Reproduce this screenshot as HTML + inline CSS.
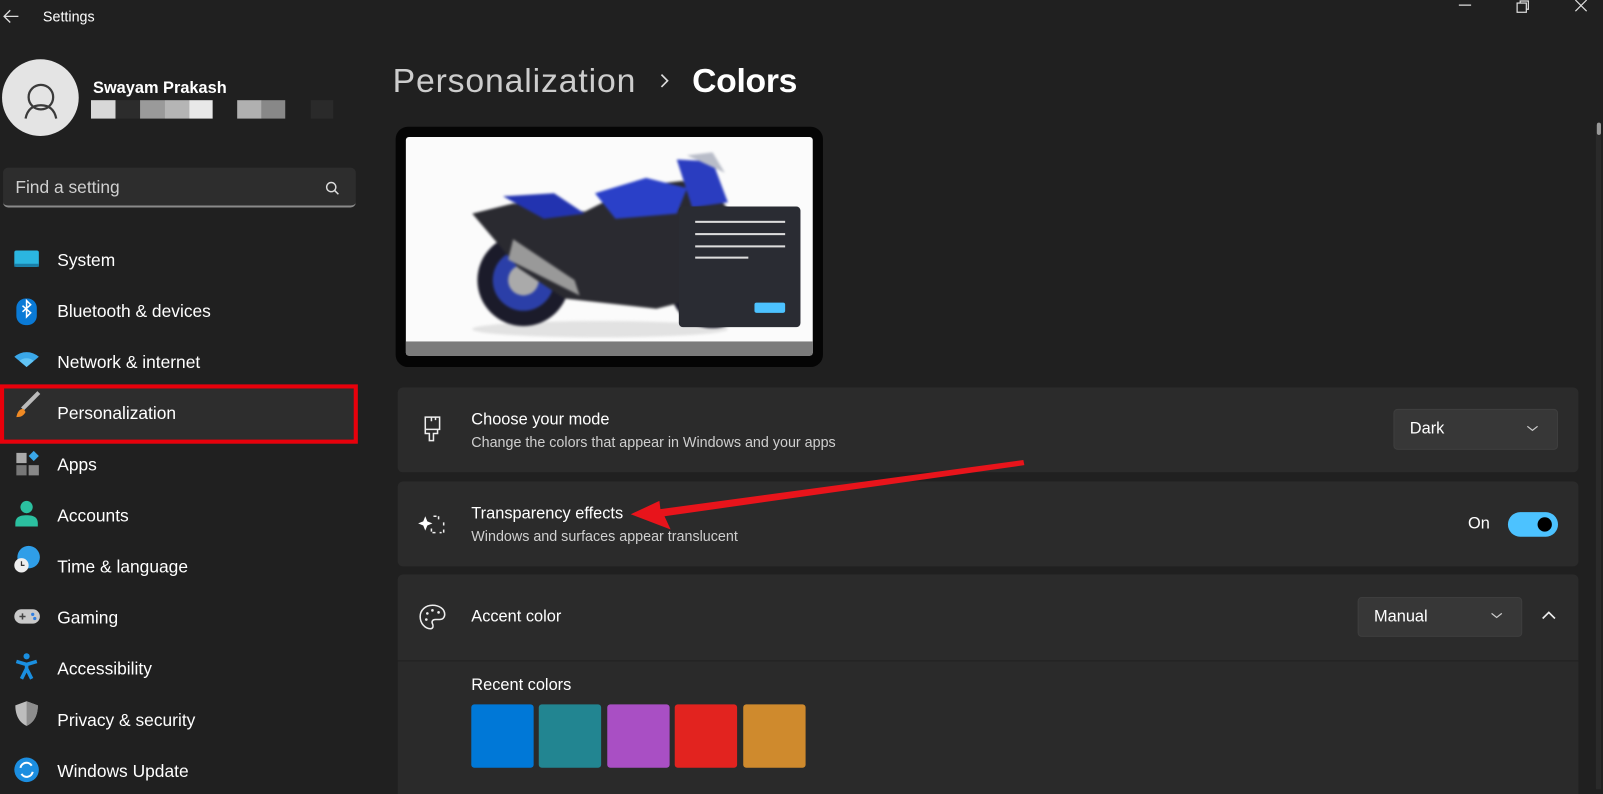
<!DOCTYPE html>
<html><head><meta charset="utf-8"><style>
*{box-sizing:border-box;margin:0;padding:0}
html,body{width:1603px;height:788px;overflow:hidden;background:#202020}
#w{position:absolute;left:0;top:0;width:1568px;height:771px;transform:scale(1.02232);transform-origin:0 0;background:#202020;font-family:"Liberation Sans",sans-serif;color:#fff}
.a{position:absolute}
.nav{position:absolute;left:56px;font-size:17px;color:#fff}
.card{position:absolute;left:389px;width:1155px;background:#2b2b2b;border-radius:5px}
.t{font-size:16px;color:#fff}
.s{font-size:14px;color:#cfcfcf}
.dd{position:absolute;background:#373737;border:1px solid #3e3e3e;border-radius:4px;font-size:16px;color:#fff}
</style></head><body><div id="w">
<svg class="a" style="left:2px;top:8px" width="18" height="16"><path d="M16 8H2M8 2L2 8l6 6" stroke="#ddd" stroke-width="1.3" fill="none"/></svg>
<div class="a" style="left:42px;top:8px;font-size:14px;color:#fff">Settings</div>
<svg class="a" style="left:1425px;top:0" width="140" height="14"><path d="M2 5h12" stroke="#ddd" stroke-width="1.2"/><rect x="59" y="3" width="9" height="9" stroke="#ddd" fill="none" stroke-width="1.2"/><path d="M62 3V1h8v8h-2" stroke="#ddd" fill="none" stroke-width="1.2"/><path d="M116 0l11 11M127 0l-11 11" stroke="#ddd" stroke-width="1.2"/></svg>
<div class="a" style="left:2px;top:58px;width:75px;height:75px;border-radius:50%;background:#e4e4e4"></div>
<svg class="a" style="left:2px;top:58px" width="75" height="75"><circle cx="38" cy="37" r="12" stroke="#3a3a3a" stroke-width="2.2" fill="none"/><path d="M23 58c2-10 8-13 15-13s13 3 15 13" stroke="#3a3a3a" stroke-width="2.2" fill="none"/></svg>
<div class="a" style="left:91px;top:78px;font-size:16px;font-weight:bold">Swayam Prakash</div>
<div class="a" style="left:89px;top:98px;width:24px;height:18px;background:#d8d8d8"></div>
<div class="a" style="left:113px;top:98px;width:24px;height:18px;background:#2c2c2c"></div>
<div class="a" style="left:137px;top:98px;width:24px;height:18px;background:#9a9a9a"></div>
<div class="a" style="left:161px;top:98px;width:24px;height:18px;background:#b5b5b5"></div>
<div class="a" style="left:185px;top:98px;width:23px;height:18px;background:#e8e8e8"></div>
<div class="a" style="left:232px;top:98px;width:24px;height:18px;background:#b0b0b0"></div>
<div class="a" style="left:256px;top:98px;width:23px;height:18px;background:#888"></div>
<div class="a" style="left:304px;top:98px;width:22px;height:18px;background:#2a2a2a"></div>
<div class="a" style="left:3px;top:164px;width:345px;height:39px;background:#2d2d2d;border-radius:5px;border-bottom:2px solid #8a8a8a"></div>
<div class="a" style="left:15px;top:174px;font-size:17px;color:#cfcfcf">Find a setting</div>
<svg class="a" style="left:318px;top:177px" width="14" height="14"><circle cx="6" cy="6" r="4.5" stroke="#ddd" stroke-width="1.4" fill="none"/><path d="M9.3 9.3L13 13" stroke="#ddd" stroke-width="1.5"/></svg>
<div class="a" style="left:0;top:376px;width:350px;height:58px;border:4px solid #e8000b;background:#2d2d2d"></div>
<svg class="a" style="left:12px;top:242px" width="30" height="530">
<rect x="2" y="3" width="24" height="16" rx="2" fill="#2bb6e0"/><rect x="2" y="16" width="24" height="3" fill="#1a7fa8"/>
<rect x="4" y="50" width="20" height="26" rx="9" fill="#0a7ad6"/><path d="M10 57l8 7-4 4V52l4 4-8 7" stroke="#fff" stroke-width="1.5" fill="none"/>
<path d="M2 107a18 18 0 0 1 24 0l-12 10z" fill="#3aa7e8"/><path d="M7 111a11 11 0 0 1 14 0l-7 6z" fill="#62c4f5"/>
<path d="M26 142L10 158" stroke="#bbb" stroke-width="4"/><path d="M4 166c1-5 3-8 7-8l2 3c-2 4-5 5-9 5z" fill="#f08a24"/>
<rect x="4" y="201" width="10" height="10" fill="#aaa"/><rect x="4" y="213" width="10" height="10" fill="#777"/><rect x="16" y="213" width="10" height="10" fill="#888"/><path d="M21 199l5 5-5 5-5-5z" fill="#3aa7e8"/>
<circle cx="14" cy="254" r="6" fill="#2bc0a0"/><path d="M3 270c0-6 4-8 11-8s11 2 11 8v3H3z" fill="#2bc0a0"/>
<circle cx="16" cy="303" r="11" fill="#2f9ee8"/><circle cx="9" cy="311" r="7" fill="#eee"/><path d="M9 307v4h3" stroke="#333" stroke-width="1.2" fill="none"/>
<rect x="2" y="354" width="25" height="14" rx="7" fill="#c9c9c9"/><path d="M7 361h6M10 358v6" stroke="#444" stroke-width="1.5"/><circle cx="20" cy="359" r="1.6" fill="#2f7ee0"/><circle cx="22" cy="363" r="1.6" fill="#2f7ee0"/>
<circle cx="14" cy="400" r="3" fill="#1a8fe0"/><path d="M4 405l10 3 10-3M14 408v4l-5 10M14 412l5 10" stroke="#1a8fe0" stroke-width="3.5" fill="none"/>
<path d="M14 444l11 4c0 10-4 17-11 20-7-3-11-10-11-20z" fill="#bdbdbd"/><path d="M14 444l11 4c0 10-4 17-11 20z" fill="#8d8d8d"/>
<circle cx="14" cy="511" r="12" fill="#1c8ee0"/><path d="M8 509a6 6 0 0 1 11-2M20 513a6 6 0 0 1-11 2" stroke="#fff" stroke-width="2" fill="none"/>
</svg>
<div class="nav" style="top:245px">System</div>
<div class="nav" style="top:295px">Bluetooth &amp; devices</div>
<div class="nav" style="top:345px">Network &amp; internet</div>
<div class="nav" style="top:395px">Personalization</div>
<div class="nav" style="top:445px">Apps</div>
<div class="nav" style="top:495px">Accounts</div>
<div class="nav" style="top:545px">Time &amp; language</div>
<div class="nav" style="top:595px">Gaming</div>
<div class="nav" style="top:645px">Accessibility</div>
<div class="nav" style="top:695px">Privacy &amp; security</div>
<div class="nav" style="top:745px">Windows Update</div>
<div class="a" style="left:384px;top:60px;font-size:33px;color:#cdcdcd;letter-spacing:0.85px">Personalization</div>
<svg class="a" style="left:644px;top:71px" width="12" height="16"><path d="M3 2l6 6-6 6" stroke="#ddd" stroke-width="1.6" fill="none"/></svg>
<div class="a" style="left:677px;top:60px;font-size:33px;font-weight:bold;letter-spacing:-0.3px">Colors</div>
<div class="a" style="left:387px;top:124px;width:418px;height:235px;background:#050505;border-radius:12px"></div>
<div class="a" style="left:397px;top:134px;width:398px;height:214px;background:#fbfbfb;border-radius:3px;overflow:hidden">
<div class="a" style="left:0;top:200px;width:398px;height:14px;background:#7b7b7b"></div>
<svg class="a" style="left:60px;top:10px;filter:blur(1.2px)" width="300" height="190">
<ellipse cx="130" cy="178" rx="125" ry="8" fill="#e2e2e2"/>
<circle cx="55" cy="130" r="45" fill="#1b1b2a"/><circle cx="55" cy="130" r="30" fill="#2b3fa8"/><circle cx="55" cy="130" r="15" fill="#aaa"/>
<circle cx="240" cy="135" r="42" fill="#1b1b2a"/><circle cx="240" cy="135" r="28" fill="#2b3fa8"/>
<path d="M5 65l40-10 70 8 50-25 45-5 30 10 35 40-30 60-60 15-90-10-45-30z" fill="#2a2a30"/>
<path d="M35 48l50-3 30 20-40 5z" fill="#2233b0"/><path d="M125 45l50-15 40 10-10 25-60 5z" fill="#2a40c8"/><path d="M205 12l35 2 15 40-35 5z" fill="#2a3dc0"/><path d="M215 8l25-3 12 20z" fill="#b8bcc8"/>
<path d="M45 90l60 40 5 15-70-35z" fill="#999"/>
</svg>
</div>
<div class="a" style="left:664px;top:202px;width:119px;height:118px;background:#2a2c33;border-radius:4px"></div>
<div class="a" style="left:680px;top:216px;width:88px;height:2px;background:#ddd"></div>
<div class="a" style="left:680px;top:228px;width:88px;height:2px;background:#ddd"></div>
<div class="a" style="left:680px;top:240px;width:88px;height:2px;background:#ddd"></div>
<div class="a" style="left:680px;top:251px;width:52px;height:2px;background:#ddd"></div>
<div class="a" style="left:738px;top:296px;width:30px;height:10px;background:#4cc2ff;border-radius:2px"></div>
<div class="a" style="left:1561px;top:122px;width:5px;height:650px;background:#2a2a2a"></div>
<div class="a" style="left:1562px;top:120px;width:4px;height:12px;background:#999;border-radius:2px"></div>
<div class="card" style="top:379px;height:83px"></div>
<div class="card" style="top:471px;height:83px"></div>
<div class="card" style="top:562px;height:84px;border-radius:5px 5px 0 0"></div>
<div class="card" style="top:647px;height:130px;border-radius:0;background:#2a2a2a"></div>
<svg class="a" style="left:408px;top:400px" width="36" height="240">
<path d="M8 8h14v12H8zM8 20v4h4l0 7h4v-7h4v-4M14 8v4M18 8v3" stroke="#eee" stroke-width="1.5" fill="none"/>
<path d="M8 105l2 5 5 2-5 2-2 5-2-5-5-2 5-2z" fill="#fff"/><path d="M16 105h5v4M26 105v0M26 111v4M26 118v3h-4M18 121h-4v-4" stroke="#eee" stroke-width="1.5" fill="none" stroke-dasharray="3 2"/>
<path d="M15 192c-7 0-12 5-12 11 0 7 5 12 10 12 3 0 3-3 2-5s0-4 3-4h4c3 0 5-2 5-5 0-5-5-9-12-9z" stroke="#eee" stroke-width="1.5" fill="none"/><circle cx="10" cy="200" r="1.3" fill="#eee"/><circle cx="15" cy="197" r="1.3" fill="#eee"/><circle cx="21" cy="199" r="1.3" fill="#eee"/><circle cx="9" cy="206" r="1.3" fill="#eee"/>
</svg>
<div class="a t" style="left:461px;top:402px">Choose your mode</div>
<div class="a s" style="left:461px;top:424px">Change the colors that appear in Windows and your apps</div>
<div class="a t" style="left:461px;top:494px">Transparency effects</div>
<div class="a s" style="left:461px;top:516px">Windows and surfaces appear translucent</div>
<div class="a t" style="left:461px;top:595px">Accent color</div>
<div class="a t" style="left:461px;top:662px">Recent colors</div>
<div class="dd" style="left:1363px;top:400px;width:161px;height:40px;padding:10px 15px">Dark</div>
<svg class="a" style="left:1493px;top:415px" width="12" height="8"><path d="M1 2l5 4 5-4" stroke="#ccc" stroke-width="1.2" fill="none"/></svg>
<div class="a t" style="left:1436px;top:504px">On</div>
<div class="a" style="left:1475px;top:501px;width:49px;height:24px;border-radius:12px;background:#4cc2ff"></div>
<div class="a" style="left:1504px;top:506px;width:14px;height:14px;border-radius:50%;background:#000"></div>
<div class="dd" style="left:1328px;top:584px;width:161px;height:39px;padding:10px 15px">Manual</div>
<svg class="a" style="left:1458px;top:598px" width="12" height="8"><path d="M1 2l5 4 5-4" stroke="#ccc" stroke-width="1.2" fill="none"/></svg>
<svg class="a" style="left:1507px;top:597px" width="16" height="10"><path d="M2 8l6-6 6 6" stroke="#eee" stroke-width="1.6" fill="none"/></svg>
<div class="a" style="left:461px;top:689px;width:61px;height:62px;background:#0078d7;border-radius:3px"></div>
<div class="a" style="left:527px;top:689px;width:61px;height:62px;background:#228591;border-radius:3px"></div>
<div class="a" style="left:594px;top:689px;width:61px;height:62px;background:#a94fc4;border-radius:3px"></div>
<div class="a" style="left:660px;top:689px;width:61px;height:62px;background:#e2231f;border-radius:3px"></div>
<div class="a" style="left:727px;top:689px;width:61px;height:62px;background:#cf8a2d;border-radius:3px"></div>
<svg class="a" style="left:0;top:0" width="1568" height="771"><polygon points="1001,450 1002,455 650,505 656,518 617,503 645,490 646,498" fill="#e8141b"/></svg>
</div></body></html>
